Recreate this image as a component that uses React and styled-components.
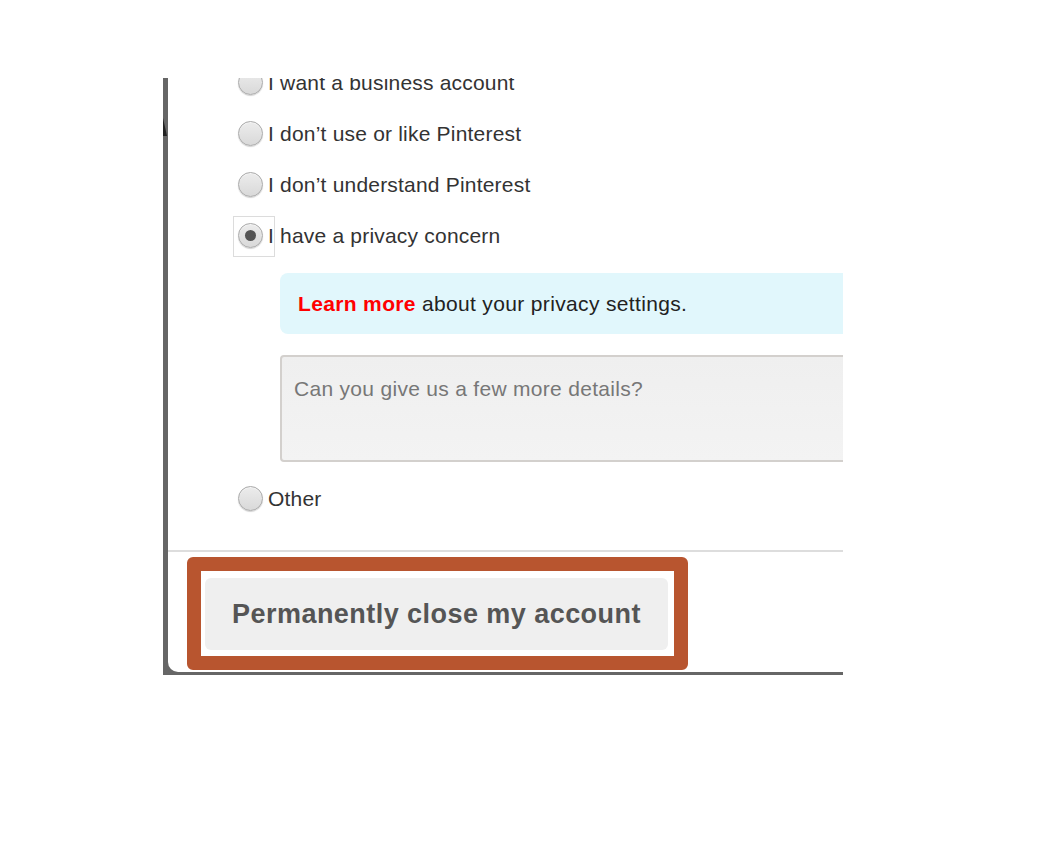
import React from "react";
import styled, { createGlobalStyle } from "styled-components";

const GlobalStyle = createGlobalStyle`
  html, body {
    margin: 0;
    padding: 0;
    background: #ffffff;
  }
  body {
    font-family: "Liberation Sans", Arial, Helvetica, sans-serif;
    -webkit-font-smoothing: antialiased;
  }
`;

const Stage = styled.div`
  padding: 78px 0 0 163px;
`;

const Frame = styled.div`
  position: relative;
  width: 680px;
  height: 597px;
  box-sizing: border-box;
  padding: 0 0 3px 5px;
  background: #666666;
  overflow: hidden;
`;

const Notch = styled.div`
  position: absolute;
  left: 0;
  top: 40px;
  width: 0;
  height: 0;
  border-top: 18px solid transparent;
  border-left: 4px solid #222;
`;

const Modal = styled.div`
  width: 900px;
  height: 100%;
  background: #ffffff;
  border-bottom-left-radius: 10px;
  overflow: hidden;
  display: flex;
  flex-direction: column;
`;

const Body = styled.div`
  margin-top: -21px;
  padding: 0 0 26px 70px;
  display: flex;
  flex-direction: column;
`;

const Row = styled.label`
  display: flex;
  align-items: center;
  height: 51px;
  gap: 5px;
  font-size: 21px;
  color: #333333;
  letter-spacing: 0.2px;
`;

const RadioWrap = styled.span`
  position: relative;
  display: inline-flex;
  width: 25px;
  height: 25px;
`;

const Radio = styled.span`
  box-sizing: border-box;
  width: 25px;
  height: 25px;
  border-radius: 50%;
  border: 1px solid #a9a9a9;
  background: linear-gradient(#ececec, #d9d9d9);
  box-shadow: 0 1px 1px rgba(0, 0, 0, 0.18), inset 0 1px 0 #f6f6f6;
  display: flex;
  align-items: center;
  justify-content: center;
  &::after {
    content: "";
    display: ${(p) => (p.$checked ? "block" : "none")};
    width: 11px;
    height: 11px;
    border-radius: 50%;
    background: #555555;
  }
`;

const FocusRing = styled.span`
  position: absolute;
  left: -5px;
  top: -7px;
  width: 42px;
  height: 41px;
  border: 1px solid #dcdcdc;
  box-sizing: border-box;
  pointer-events: none;
`;

const Details = styled.div`
  margin: 12px 0 11px 42px;
  display: flex;
  flex-direction: column;
  gap: 21px;
  width: 640px;
`;

const InfoBox = styled.div`
  box-sizing: border-box;
  height: 61px;
  display: flex;
  align-items: center;
  padding: 0 18px;
  background: #e1f7fc;
  border-radius: 8px;
  font-size: 21px;
  letter-spacing: 0.35px;
  color: #222222;
`;

const LearnMore = styled.a`
  color: #ff0000;
  font-weight: 700;
  text-decoration: none;
  margin-right: 6px;
`;

const DetailsInput = styled.textarea`
  box-sizing: border-box;
  height: 107px;
  padding: 20px 12px;
  border: 2px solid #d3d0cd;
  border-radius: 4px;
  background: linear-gradient(#efefef, #f3f3f3);
  font-family: "Liberation Sans", Arial, sans-serif;
  font-size: 21px;
  letter-spacing: 0.3px;
  resize: none;
  outline: none;
  &::placeholder {
    color: #777777;
  }
`;

const Divider = styled.div`
  height: 2px;
  background: #dddddd;
`;

const Footer = styled.div`
  padding: 5px 0 0 19px;
`;

const Highlight = styled.div`
  width: fit-content;
  border: 14px solid #b8552f;
  border-radius: 6px;
  padding: 7px 6px 6px 4px;
  background: #ffffff;
`;

const CloseButton = styled.button`
  width: 463px;
  height: 72px;
  border: none;
  border-radius: 6px;
  background: #efefef;
  color: #555555;
  font-family: "Liberation Sans", Arial, sans-serif;
  font-weight: 700;
  font-size: 27px;
  letter-spacing: 0.45px;
  cursor: pointer;
`;

const reasons = [
  { label: "I want a business account" },
  { label: "I don\u2019t use or like Pinterest" },
  { label: "I don\u2019t understand Pinterest" },
  { label: "I have a privacy concern", checked: true },
];

function RadioItem({ label, checked }) {
  return (
    <Row>
      <RadioWrap>
        <Radio $checked={checked} />
        {checked && <FocusRing />}
      </RadioWrap>
      {label}
    </Row>
  );
}

export default function App() {
  return (
    <>
      <GlobalStyle />
      <Stage>
        <Frame>
          <Notch />
          <Modal>
            <Body>
              {reasons.map((r) => (
                <RadioItem key={r.label} label={r.label} checked={r.checked} />
              ))}
              <Details>
                <InfoBox>
                  <LearnMore href="#">Learn more</LearnMore>
                  about your privacy settings.
                </InfoBox>
                <DetailsInput placeholder="Can you give us a few more details?" />
              </Details>
              <RadioItem label="Other" />
            </Body>
            <Divider />
            <Footer>
              <Highlight>
                <CloseButton>Permanently close my account</CloseButton>
              </Highlight>
            </Footer>
          </Modal>
        </Frame>
      </Stage>
    </>
  );
}
